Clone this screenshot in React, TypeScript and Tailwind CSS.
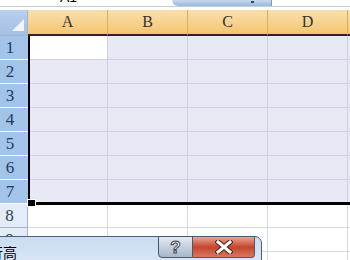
const cols = ["A", "B", "C", "D", "E"];
const rows = [1, 2, 3, 4, 5, 6, 7, 8, 9, 10];

const RowHeader = ({ n, selected }: { n: number; selected: boolean }) => (
  <div
    className={
      selected
        ? "w-[28px] shrink-0 h-[24px] border-b border-white bg-[#a3c3e9] text-[#1f3b62] flex items-center justify-center pr-2 text-[17px] leading-none"
        : "w-[28px] shrink-0 h-[24px] border-b border-r border-[#9eb6ce] bg-[#e4ecf7] text-[#2d3f57] flex items-center justify-center pr-2 text-[17px] leading-none"
    }
  >
    {n}
  </div>
);

const Cell = ({ selected, active }: { selected: boolean; active: boolean }) => (
  <div
    className={
      active
        ? "w-[80px] shrink-0 h-[24px] border-b border-r border-[#cdd1e3] bg-white"
        : selected
        ? "w-[80px] shrink-0 h-[24px] border-b border-r border-[#cdd1e3] bg-[#e7e9f5]"
        : "w-[80px] shrink-0 h-[24px] border-b border-r border-[#d4d9e6] bg-white"
    }
  />
);

export default function App() {
  return (
    <div className="relative w-[350px] h-[260px] overflow-hidden bg-white font-['Liberation_Serif',serif]">
      {/* top strip: formula bar remains */}
      <div className="relative h-[10px] overflow-hidden">
        <div className="absolute left-[60px] top-[-10px] text-[14px] leading-[14px] font-['Liberation_Sans',sans-serif] text-black">
          A1
        </div>
        <div className="absolute left-[172px] top-0 w-[100px] h-[6px] rounded-bl-[6px] border-r border-[#7d96b8] bg-gradient-to-b from-[#c7d8ee] to-[#9db6d9]">
          <div className="absolute left-[79px] top-[1px] w-[3px] h-[2px] bg-[#3c4858]" />
        </div>
        <div className="absolute left-0 right-0 top-[6px] h-px bg-[#c3cedb]" />
      </div>

      {/* column headers */}
      <div className="flex h-[26px]">
        <div className="relative w-[28px] shrink-0 border-b border-r border-[#9eb6ce] bg-gradient-to-b from-[#b9d0ee] to-[#a3bfe4]">
          <svg className="absolute left-[12px] top-[9px]" width="12" height="12" viewBox="0 0 12 12">
            <polygon points="12,0 12,12 0,12" fill="#ffffff" opacity="0.85" />
          </svg>
        </div>
        {cols.map((c) => (
          <div
            key={c}
            className="w-[80px] shrink-0 border-r border-b-2 border-r-[#dcaa58] border-b-[#2e2616] bg-gradient-to-b from-[#fae0ad] to-[#f4c56f] flex items-center justify-center text-[16px] text-[#333333] leading-none"
          >
            {c}
          </div>
        ))}
      </div>

      {/* grid */}
      <div className="flex flex-col">
        {rows.map((r) => (
          <div key={r} className="flex">
            <RowHeader n={r} selected={r <= 7} />
            {cols.map((c) => (
              <Cell key={c} selected={r <= 7} active={r === 1 && c === "A"} />
            ))}
          </div>
        ))}
      </div>

      {/* selection outline */}
      <div className="absolute left-[28px] top-[36px] w-[340px] h-[169px] border-l-2 border-b-[3px] border-black" />
      <div className="absolute left-[27px] top-[199px] w-[9px] h-[8px] border border-white bg-black" />

      {/* row height dialog */}
      <div className="absolute left-[-12px] top-[236px] w-[274px] h-[40px] rounded-tr-[7px] border border-[#54606f] bg-gradient-to-b from-[#cadcf2] to-[#e0ebf8]">
        <div className="absolute left-[0px] top-[7px] text-[14px] leading-[16px] text-black font-['Noto_Sans_CJK_SC',sans-serif]">
          行高
        </div>
        <div className="absolute right-[6px] top-[-1px] flex h-[22px]">
          <div className="w-[35px] h-full rounded-bl-[4px] border border-[#4c5969] bg-gradient-to-b from-[#e2e9f2] to-[#a7b7cb] flex items-center justify-center">
            <span className="text-[17px] font-bold leading-none text-white font-['Liberation_Sans',sans-serif] [-webkit-text-stroke:1px_#3a4350]">
              ?
            </span>
          </div>
          <div className="w-[62px] h-full rounded-br-[4px] border border-l-0 border-[#4c5969] bg-gradient-to-b from-[#e9a593] via-[#c5442c] to-[#d9765e] flex items-center justify-center">
            <svg width="18" height="14" viewBox="0 0 18 14">
              <path d="M3 2 L15 12 M15 2 L3 12" stroke="#4a2018" strokeWidth="5" strokeLinecap="square" />
              <path d="M3 2 L15 12 M15 2 L3 12" stroke="#ffffff" strokeWidth="3" strokeLinecap="square" />
            </svg>
          </div>
        </div>
      </div>
    </div>
  );
}
